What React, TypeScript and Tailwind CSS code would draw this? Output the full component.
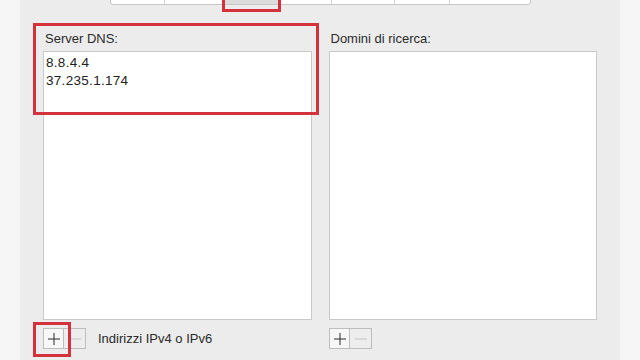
import React from "react";

const tabs = [
  { w: "w-[54px]", on: false },
  { w: "w-[60px]", on: false },
  { w: "w-[56px]", on: true },
  { w: "w-[51px]", on: false },
  { w: "w-[63px]", on: false },
  { w: "w-[55px]", on: false },
  { w: "w-[80px]", on: false },
];

const PlusIcon = ({ dim }: { dim?: boolean }) => (
  <svg width="12" height="12" viewBox="0 0 12 12">
    <line x1="0" y1="6" x2="12" y2="6" stroke={dim ? "#c4c4c4" : "#2a2a2a"} strokeWidth="1" />
    <line x1="6" y1="0" x2="6" y2="12" stroke={dim ? "#c4c4c4" : "#2a2a2a"} strokeWidth="1" />
  </svg>
);

const MinusIcon = ({ dim }: { dim?: boolean }) => (
  <svg width="12" height="12" viewBox="0 0 12 12">
    <line x1="0" y1="6" x2="12" y2="6" stroke={dim ? "#c4c4c4" : "#2a2a2a"} strokeWidth="1" />
  </svg>
);

function AddRemove() {
  return (
    <div className="flex h-[21px] border border-[#bdbdbd]">
      <div className="w-[20px] flex items-center justify-center bg-[#f7f7f7] border-r border-[#bdbdbd]">
        <PlusIcon />
      </div>
      <div className="w-[21px] flex items-center justify-center bg-[#ededed]">
        <MinusIcon dim />
      </div>
    </div>
  );
}

function Column({ label, lines }: { label: string; lines: string[] }) {
  return (
    <div className="w-[269px] flex flex-col">
      <div className="pl-[2px] text-[13px] leading-[16px] text-[#2b2b2b]">{label}</div>
      <div className="mt-[4px] h-[269px] bg-white border border-[#c9c9c9] pt-[2px] pl-[2px]">
        {lines.map((l) => (
          <div key={l} className="text-[13.5px] leading-[18px] tracking-[0.3px] text-[#222]">
            {l}
          </div>
        ))}
      </div>
    </div>
  );
}

export default function App() {
  return (
    <div
      className="relative w-[640px] h-[360px] overflow-hidden bg-[#f6f6f6] flex"
      style={{ fontFamily: '"Liberation Sans", Arial, sans-serif' }}
    >
      <div className="ml-[20px] w-[600px] h-full bg-[#ececec] flex flex-col">
        <div className="ml-[90px] flex h-[5px] w-fit border border-t-0 border-[#c6c6c6] rounded-b-[4px] overflow-hidden bg-white">
          {tabs.map((t, i) => (
            <div
              key={i}
              className={`${t.w} h-full ${t.on ? "bg-[#dcdcdc]" : "bg-white"} ${i < tabs.length - 1 ? "border-r border-[#d2d2d2]" : ""}`}
            />
          ))}
        </div>

        <div className="mt-[26px] px-[23px] flex gap-[17px]">
          <Column label="Server DNS:" lines={["8.8.4.4", "37.235.1.174"]} />
          <Column label="Domini di ricerca:" lines={[]} />
        </div>

        <div className="mt-[8px] px-[23px] flex">
          <div className="w-[269px] flex items-center">
            <AddRemove />
            <span className="ml-[12px] text-[13px] text-[#2b2b2b]">Indirizzi IPv4 o IPv6</span>
          </div>
          <div className="ml-[17px]">
            <AddRemove />
          </div>
        </div>
      </div>

      {/* red annotation boxes */}
      <div className="absolute left-[222px] top-[-4px] w-[59px] h-[16px] border-[3px] border-[#d3323c]" />
      <div className="absolute left-[33px] top-[23px] w-[286px] h-[92px] border-[3px] border-[#d3323c]" />
      <div className="absolute left-[33px] top-[322px] w-[38px] h-[35px] border-[3px] border-[#d3323c]" />
    </div>
  );
}
